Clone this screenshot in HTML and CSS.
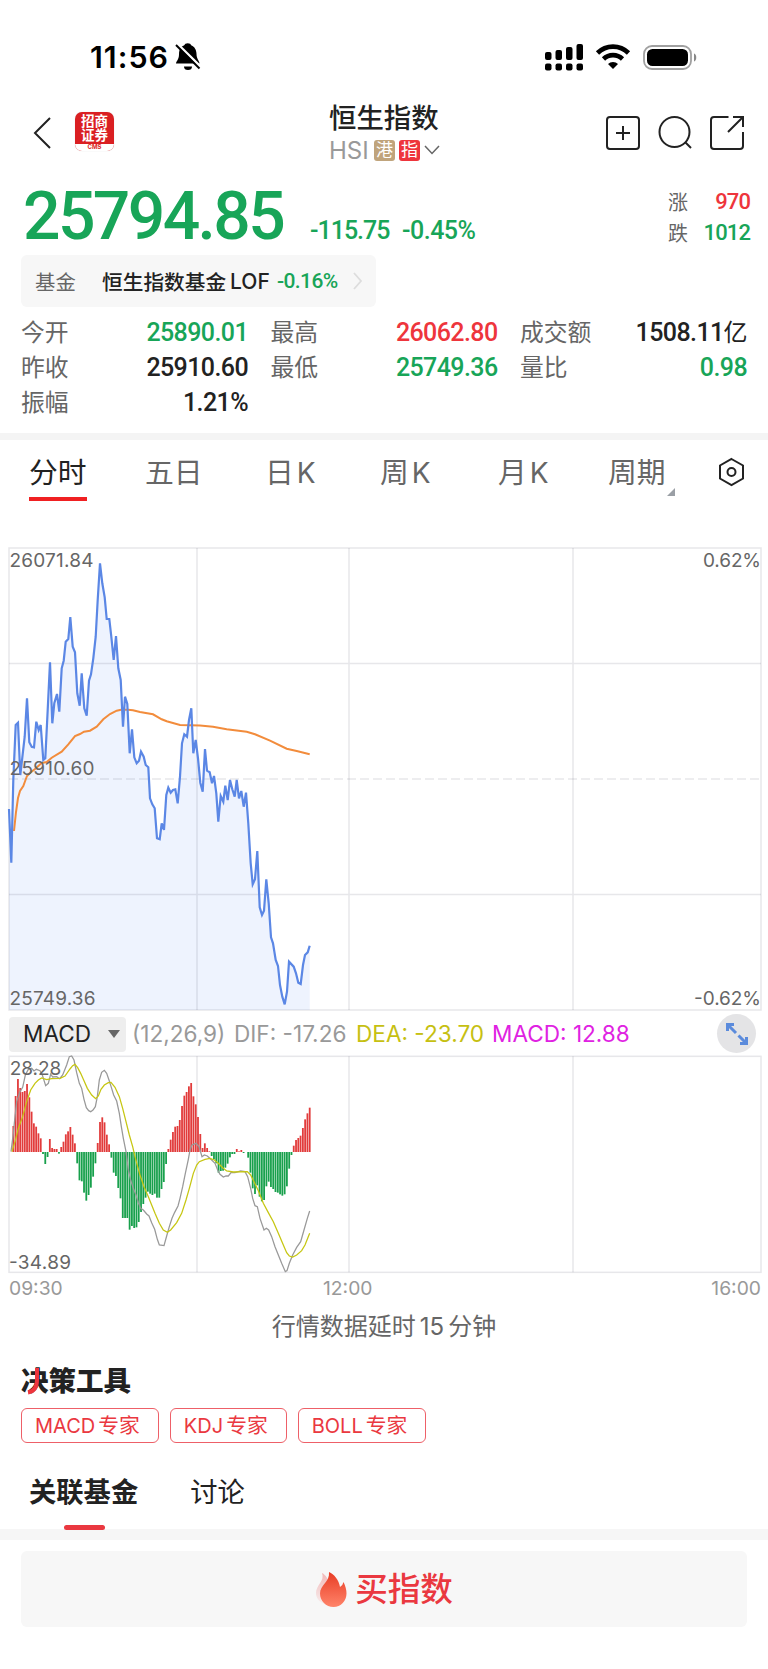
FILE: index.html
```html
<!DOCTYPE html>
<html lang="zh-CN">

<head>
    <meta charset="UTF-8">
    <meta name="viewport" content="width=device-width, initial-scale=1.0">
    <title>恒生指数 HSI</title>
    <link rel="stylesheet" href="styles.css">
</head>

<body>
    <div class="status">
        <span class="clock">11:56</span>
        <svg class="bell" width="26" height="28" viewBox="0 0 26 28">
            <path d="M1 20.500c0-2 3-4 3-9C4 5 7 3 9 2.500a4 3.500 0 0 1 7.500 0C19.500 3.500 21.500 7 21.500 11c0 5 3 7 3 9.500z" />
            <path d="M9 23.500h8a4 3.500 0 0 1-8 0z" />
            <path d="M1.500 0 26 24" stroke="#fff" stroke-width="2.500" />
            <path d="M1 2 24.500 25.500" stroke="#000" stroke-width="2" />
        </svg>
        <svg class="signal" width="172" height="30" viewBox="0 0 172 30">
            <g>
                <rect x="1" y="10" width="6.500" height="8" rx="2" />
                <rect x="11.500" y="8" width="6.500" height="10" rx="2" />
                <rect x="22" y="5" width="6.500" height="13" rx="2" />
                <rect x="32.500" y="2" width="6.500" height="16" rx="2" />
                <rect x="1" y="21.500" width="6.500" height="7" rx="2" />
                <rect x="11.500" y="21.500" width="6.500" height="7" rx="2" />
                <rect x="22" y="21.500" width="6.500" height="7" rx="2" />
                <rect x="32.500" y="21.500" width="6.500" height="7" rx="2" />
            </g>
            <g fill="none" stroke="#000" stroke-width="4.600">
                <path d="M53.500 11a22 22 0 0 1 31 0" />
                <path d="M59.500 17a13.500 13.500 0 0 1 19 0" />
            </g>
            <path d="M64 22a7 7 0 0 1 10 0l-5 5z" />
            <rect x="100" y="4" width="47" height="23" rx="8" fill="none" stroke="#a0a0a0" stroke-width="1.800" />
            <rect x="103" y="7" width="41" height="17" rx="5.500" />
            <path d="M150 11.500c3 .5 3 7.500 0 8z" fill="#888" />
        </svg>
    </div>

    <header class="header">
        <svg class="back" width="20" height="34" viewBox="0 0 20 34">
            <path d="M17 2 2 17l15 15" />
        </svg>
        <div class="logo">
            <div class="logo-name">招商<br>证券</div>
            <div class="logo-cms">CMS</div>
        </div>
        <div class="title">
            <h1>恒生指数</h1>
            <div class="code">
                <span class="hsi">HSI</span>
                <span class="badge badge-hk">港</span>
                <span class="badge badge-index">指</span>
                <svg width="16" height="10" viewBox="0 0 16 10">
                    <path d="M1 1l7 7.500L15 1" />
                </svg>
            </div>
        </div>
        <svg class="actions" width="142" height="36" viewBox="0 0 142 36">
            <rect x="2" y="2" width="32" height="32" rx="3" />
            <path d="M18 11v14M11 18h14" />
            <circle cx="69.500" cy="17" r="15" />
            <path d="M80 27l6 6" />
            <path d="M123.500 2H109q-3 0-3 3v26q0 3 3 3h26q3 0 3-3V17M128 2h10v10M138 2l-15 15" />
        </svg>
    </header>

    <section class="quote">
        <span class="price">25794.85</span>
        <span class="change">-115.75</span>
        <span class="change pct">-0.45%</span>
        <div class="updown">
            <div><span>涨</span><b class="up">970</b></div>
            <div><span>跌</span><b class="down">1012</b></div>
        </div>
    </section>

    <div class="fund">
        <span class="fund-label">基金</span>
        <span class="fund-name">恒生指数基金</span>
        <span class="fund-type">LOF</span>
        <span class="fund-pct">-0.16%</span>
        <svg width="10" height="20" viewBox="0 0 10 20">
            <path d="M1 2l7 8-7 8" />
        </svg>
    </div>

    <section class="stats">
        <div><span>今开</span><b class="down">25890.01</b></div>
        <div><span>最高</span><b class="up">26062.80</b></div>
        <div><span>成交额</span><b>1508.11<i>亿</i></b></div>
        <div><span>昨收</span><b>25910.60</b></div>
        <div><span>最低</span><b class="down">25749.36</b></div>
        <div><span>量比</span><b class="down">0.98</b></div>
        <div><span>振幅</span><b>1.21%</b></div>
    </section>

    <nav class="periods">
        <a class="active">分时</a>
        <a>五日</a>
        <a>日<em>K</em></a>
        <a>周<em>K</em></a>
        <a>月<em>K</em></a>
        <a class="more">周期</a>
        <svg width="27" height="30" viewBox="0 0 27 30">
            <path d="M13.500 2 25 8.500v13L13.500 28 2 21.500v-13z" />
            <circle cx="13.500" cy="15" r="4" />
        </svg>
    </nav>

    <!-- intraday price -->
    <svg class="chart" width="768" height="475" viewBox="0 540 768 475">
        <polygon id="area" class="area" />
        <g class="grid">
            <rect x="9" y="548" width="752" height="462" />
            <path d="M9 663.500H761M9 894.500H761M197 548V1010M349 548V1010M573 548V1010" />
            <path d="M9 779H761" stroke-dasharray="9 4" />
        </g>
        <polyline class="avg" points="14,831 16,812 18,798 20,791 23.300,786 25.500,780 27,776 30,773 35,769 41.700,763 46.700,762 51.700,757.700 61.700,751.700 68.300,744.300 75,736 80,734 84,731.700 90,730.700 96.700,726.700 103.300,719.300 110,714 116.700,710.700 121,709.700 128,709.700 133,710.300 140,712 153,714.300 161.700,719.300 166.700,721.300 180,725 200,725.500 213,726.700 226.700,729.300 246.700,731.700 255,734.300 270,740.700 286.700,748.700 296.700,751 309.700,754.300" />
        <polyline id="price" class="line" points="9,809 11.300,862.700 13.300,780 15.700,725 18,722.700 20.300,775 24.700,736.700 27,698.300 29.300,742.300 31.700,746.700 34,747.300 36.300,721.700 38.700,730 40.700,725 43.300,760 45.300,758.300 47.700,710 50,662.300 52.300,723.300 54.300,703.300 57,694 59.300,711.700 61.700,668.300 63.700,660.700 65.700,641.700 68.300,639 70.300,617 72.700,646.700 75,652.300 77.300,693.300 79.700,705.700 81.700,673.300 84.300,708.300 86.700,715.700 89,680.700 91,674.300 93.300,658.300 95.700,636.700 97.700,600 100,563.300 102.300,583.300 104.700,597.300 106.700,619 109.300,619 111.300,636.700 113.700,660 116,636 118.300,668.300 120.700,680 123,726.700 125,696.700 127.300,704 129.700,753.300 132,729.300 134.300,757.300 136.700,763.300 139,760.700 141,751.700 143.700,756.700 145.700,765 148.300,767.300 150,798.300 152.300,804.300 154.700,808.300 157,838.300 159.700,839.300 161.700,823.300 164,830 166.300,795 168.300,787.700 170.700,792.700 173,790 175.300,789.300 177.700,803.300 180,776.700 182,743.300 184.300,734.300 187,736.700 189,720 191.300,708.300 193.300,753.300 195.700,740 198,758.300 200.300,782.700 202.700,791.700 205,749 207,770.700 209.700,772.300 212,783.300 214,776 216.300,793.300 218.300,821.700 220.700,796 223.300,801.700 225.300,785.700 227.700,800 230,780 232.300,789.300 234.700,796.700 236.700,780 239,798.300 241.300,791 243.700,806.700 246,792.700 248.300,823.300 250.700,863.300 252.700,884.300 255,879.300 257.300,851 259.700,907.300 262,915 264,910.700 266.300,879.300 268.700,903.300 271,937.300 273,943.300 275.700,960 278,966 280,985 282.300,996.700 284.700,1004.300 287,991.700 289,961.700 293.700,966.700 296,973.300 298.300,982.700 300.700,984 303,965 305,955 307.700,952.300 309.700,945.700" />
        <g class="axis">
            <text x="9.500" y="566.500" textLength="84">26071.84</text>
            <text x="9.500" y="774.500" textLength="85">25910.60</text>
            <text x="9.500" y="1004.500" textLength="86">25749.36</text>
            <text x="761" y="566.500" textLength="58" text-anchor="end">0.62%</text>
            <text x="761" y="1004.500" textLength="67" text-anchor="end">-0.62%</text>
        </g>
    </svg>

    <div class="indicator">
        <div class="picker">MACD<i></i></div>
        <span class="params">(12,26,9)</span>
        <span class="dif">DIF: -17.26</span>
        <span class="dea">DEA: -23.70</span>
        <span class="macd">MACD: 12.88</span>
        <div class="expand">
            <svg width="24" height="24" viewBox="0 0 24 24">
                <path d="M2.500 9V2.500H9M3 3l8 8M21.500 15v6.500H15M21 21l-7.500-7.500" />
            </svg>
        </div>
    </div>

    <!-- MACD, drawn at 3 units per pixel -->
    <svg class="chart" width="768" height="219" viewBox="0 165 2304 657">
        <g class="grid grid-macd">
            <rect x="27" y="169" width="2256" height="648" />
            <path d="M591 169V817M1047 169V817M1719 169V817" />
        </g>
        <g id="bars"></g>
        <polyline class="dif-line" points="33,455 40,400 45,350 50,305 60,275 68,262 76,225 85,208 95,205 102,213 109,208 120,212 127,225 137,257 145,250 152,222 158,231 170,230 179,236 188,225 200,195 208,170 215,168 222,180 230,218 238,250 245,265 252,298 259,323 266,332 272,335 279,330 286,320 292,290 298,240 305,217 313,211 320,220 327,240 334,262 341,285 350,303 358,340 364,380 370,415 378,455 385,510 392,540 400,565 408,585 415,608 422,625 430,630 440,642 447,648 455,668 464,688 472,718 478,735 492,737 500,708 508,680 516,655 524,637 534,618 540,595 548,560 556,520 565,478 570,450 576,435 588,430 597,440 606,470 613,465 622,468 632,477 645,490 653,510 660,523 670,531 678,528 685,528 693,518 705,518 722,513 735,515 743,530 752,565 758,595 765,617 772,620 780,655 792,690 799,685 806,690 815,710 825,740 835,765 845,790 856,815 861,812 868,790 878,765 890,742 902,725 912,690 922,655 929,633" />
        <polyline class="dea-line" points="36,455 45,425 55,385 68,350 80,305 92,270 105,250 115,240 125,234 140,239 155,236 180,235 195,228 210,207 218,197 225,193 233,203 242,220 252,242 262,265 275,285 287,296 295,288 303,268 313,255 325,248 333,247 345,262 358,290 368,325 378,365 388,405 398,440 405,470 413,500 420,525 432,560 445,590 455,615 465,640 478,670 490,690 502,697 512,690 530,668 545,640 558,600 568,565 580,520 590,495 598,485 615,478 630,475 643,480 655,490 668,503 680,513 700,516 742,515 752,525 762,545 775,572 790,610 805,638 820,665 835,700 850,735 860,758 868,768 878,771 890,765 905,752 915,735 929,700" />
        <g class="axis axis-macd">
            <text x="29" y="224" textLength="155">28.28</text>
            <text x="27" y="806" textLength="186">-34.89</text>
        </g>
    </svg>

    <div class="times">
        <span>09:30</span>
        <span>12:00</span>
        <span>16:00</span>
    </div>

    <p class="delay">行情数据延时<span>15</span>分钟</p>

    <section class="tools">
        <h2>决策工具
            <svg width="14" height="28" viewBox="0 0 14 28">
                <path d="M10 0v12c0 8-3 11.500-9 12.500" />
            </svg>
        </h2>
        <div class="chips">
            <a><span>MACD</span>专家</a>
            <a><span>KDJ</span>专家</a>
            <a><span>BOLL</span>专家</a>
        </div>
    </section>

    <nav class="tabs">
        <a class="active">关联基金</a>
        <a>讨论</a>
    </nav>

    <div class="buy">
        <svg width="32" height="36" viewBox="0 0 32 36">
            <defs>
                <linearGradient id="flame" x1="0" y1="0" x2="0" y2="1">
                    <stop offset="0" stop-color="#e83c25" />
                    <stop offset="1" stop-color="#ff846a" />
                </linearGradient>
                <linearGradient id="shade" x1="0" y1="0" x2="0" y2="1">
                    <stop offset="0" stop-color="#f2b8b8" />
                    <stop offset="1" stop-color="#f7efef" />
                </linearGradient>
            </defs>
            <path d="M7 2c4 2 6 6 8 12l-2 20C6 33 1 28 1 22 1 14 10 10 7 2z" fill="url(#shade)" />
            <path d="M14 1c5 2 10 8 11 15q3-2 3.500-5c2 4 3 8 3 11.500C31.500 30 26 36 18.500 36S5 30 5 22.500C5 14 15 11 14 1z" fill="url(#flame)" />
        </svg>
        <span>买指数</span>
    </div>

    <script>
        // close the price line down to the bottom of the chart
        const line = document.getElementById('price').getAttribute('points');
        document.getElementById('area').setAttribute('points', line + ' 309.7,1010 9,1010');

        const hist = [
            78, 168, 219, 192, 180, 183, 204, 164, 121, 86, 76, 56, 41, -6, -36, -15, 39, 12, 9, 9,
            -5, 15, 31, 53, 62, 75, 52, 26, -34, -85, -88, -122, -146, -129, -107, -74, -34, 27, 90, 104,
            89, 52, 23, -17, -62, -72, -108, -139, -198, -198, -198, -233, -222, -228, -226, -210, -180, -156, -137, -119,
            -125, -129, -125, -137, -137, -111, -90, -36, 9, 37, 60, 76, 78, 96, 138, 169, 180, 197, 207, 167,
            143, 105, 54, 12, 26, 12, 2, -12, -22, -34, -62, -57, -56, -47, -35, -16, -6, -6, 9, 2,
            6, -3, 0, -17, -62, -109, -126, -100, -134, -148, -144, -103, -89, -105, -111, -120, -122, -127, -131, -127,
            -103, -50, -9, 19, 36, 42, 49, 72, 98, 116, 133
        ];
        const zero = 456;
        const step = 889 / (hist.length - 1);
        let bars = '';
        hist.forEach((v, i) => {
            const x = (40 + i * step - 2.6).toFixed(1);
            const y = v > 0 ? zero - v : zero;
            bars += `<rect class="${v > 0 ? 'bar-up' : 'bar-down'}" x="${x}" y="${y}" width="5.400" height="${Math.abs(v)}"/>`;
        });
        document.getElementById('bars').innerHTML = bars;
    </script>
</body>

</html>
```
FILE: styles.css
```css
* {
    box-sizing: border-box;
}

body {
    margin: 0;
    background-color: #fff;
    color: #222;
    font-family: Inter, "Noto Sans CJK SC", sans-serif;
}

svg {
    display: block;
    flex: none;
}

b,
i,
em {
    font-style: normal;
}

.up {
    color: #ee353c;
}

.down {
    color: #18a558;
}

/* status bar */
.status {
    display: flex;
    align-items: center;
    height: 100px;
    padding: 14px 52px 0 90px;
    color: #000;
}

.clock {
    width: 85px;
    font-size: 30.400px;
    font-weight: 600;
    letter-spacing: 1px;
}

.signal {
    margin-left: auto;
}

/* header */
.header {
    display: flex;
    align-items: center;
    height: 66px;
    padding: 0 21px 0 33px;
}

.back {
    fill: none;
    stroke: #222;
    stroke-width: 2;
}

.logo {
    width: 39px;
    height: 39px;
    margin: -3px 0 0 22px;
    border-radius: 7px;
    overflow: hidden;
    background-color: #da1f22;
    color: #fff;
    text-align: center;
    box-shadow: 0 0 1px #ccc;
}

.logo-name {
    height: 32px;
    padding-top: 2px;
    font-size: 13.500px;
    font-weight: 700;
    line-height: 14px;
}

.logo-cms {
    height: 7px;
    background-color: #fff;
    color: #da1f22;
    font-size: 6px;
    font-weight: 700;
    line-height: 6px;
}

.title {
    width: 112px;
    margin-left: 215px;
}

.title h1 {
    height: 34px;
    margin: 0;
    font-size: 27.400px;
    font-weight: 500;
    line-height: 36px;
}

.code {
    display: flex;
    align-items: center;
    height: 32px;
}

.hsi {
    width: 45px;
    color: #999;
    font-size: 24px;
}

.badge {
    width: 21px;
    height: 21px;
    margin-right: 4px;
    border-radius: 3px;
    color: #fff;
    font-size: 17px;
    line-height: 21px;
    text-align: center;
}

.badge-hk {
    background-color: #c0a47c;
}

.badge-index {
    background-color: #ee353c;
}

.code svg {
    fill: none;
    stroke: #666;
    stroke-width: 1.500;
}

.actions {
    margin-left: auto;
    fill: none;
    stroke: #222;
    stroke-width: 2;
}

/* price */
.quote {
    display: flex;
    align-items: baseline;
    height: 89px;
    padding: 12px 18px 0 23px;
    font-family: Roboto, "Noto Sans CJK SC", sans-serif;
    color: #18a558;
}

.price {
    width: 287px;
    font-size: 66px;
    font-weight: 500;
    letter-spacing: -2.600px;
}

.change {
    width: 92px;
    font-size: 25px;
    font-weight: 500;
    letter-spacing: -1px;
}

.pct {
    letter-spacing: -0.5px;
}

.updown {
    align-self: flex-start;
    width: 82px;
    margin-left: auto;
    padding-top: 8px;
}

.updown div {
    display: flex;
    align-items: center;
    justify-content: space-between;
    height: 31px;
}

.updown span {
    color: #666;
    font-size: 20px;
}

.updown b {
    font-size: 22px;
    font-weight: 500;
    letter-spacing: -0.9px;
}

.fund {
    display: flex;
    align-items: center;
    width: 355px;
    height: 52px;
    margin-left: 21px;
    padding-left: 14px;
    border-radius: 6px;
    background-color: #f7f7f7;
    font-size: 20.400px;
}

.fund-label {
    width: 67px;
    color: #666;
}

.fund-name {
    width: 128px;
    font-size: 20.700px;
    font-weight: 500;
}

.fund-type {
    width: 47px;
    font-size: 21px;
    font-weight: 500;
}

.fund-pct {
    width: 76px;
    color: #18a558;
    font-family: Roboto, sans-serif;
    font-size: 21px;
    font-weight: 500;
    letter-spacing: -0.6px;
}

.fund svg {
    fill: none;
    stroke: #ddd;
    stroke-width: 1.800;
}

.stats {
    display: grid;
    grid-template-columns: repeat(3, 227px);
    grid-auto-rows: 35px;
    column-gap: 22.500px;
    height: 126px;
    padding: 8px 21px 0;
}

.stats div {
    display: flex;
    align-items: center;
    justify-content: space-between;
}

.stats span {
    padding-bottom: 1px;
    color: #666;
    font-size: 23.800px;
    line-height: 31px;
}

.stats b {
    font-family: Roboto, sans-serif;
    font-size: 25px;
    font-weight: 500;
    letter-spacing: -0.6px;
}

.stats i {
    font-family: "Noto Sans CJK SC", sans-serif;
    font-size: 24px;
    font-weight: 400;
    line-height: 25px;
}

/* chart */
.periods {
    display: grid;
    grid-template-columns: 116px 120px 115px 118px 110px 110px 27px;
    height: 107px;
    padding-left: 29px;
    border-top: 7px solid #f4f4f4;
    font-size: 28.800px;
}

.periods a {
    position: relative;
    justify-self: start;
    height: 61px;
    line-height: 66px;
    color: #666;
}

.periods .active {
    border-bottom: 4px solid #f02022;
    color: #222;
}

.periods em {
    margin-left: 3px;
    font-size: 28px;
}

.more::after {
    content: "";
    position: absolute;
    right: -9px;
    bottom: 5px;
    border-bottom: 8px solid #9a9fa5;
    border-left: 8px solid transparent;
}

.periods svg {
    margin-top: 17px;
    fill: none;
    stroke: #222;
    stroke-width: 2;
}

.grid {
    fill: none;
    stroke: rgba(60, 60, 80, 0.12);
    stroke-width: 1.500;
}

.grid-macd {
    stroke-width: 4.500;
}

.area {
    fill: #eef3fe;
}

.avg {
    fill: none;
    stroke: #f28c3c;
    stroke-width: 2;
}

.line {
    fill: none;
    stroke: #5b87e5;
    stroke-width: 2.200;
}

.axis {
    fill: #666;
    font-size: 19px;
}

.axis-macd {
    font-size: 57px;
}

.indicator {
    display: flex;
    align-items: center;
    height: 40px;
    padding: 0 12px 0 9px;
    font-size: 22.600px;
    line-height: 32px;
    white-space: nowrap;
}

.indicator span {
    padding-bottom: 2px;
}

.picker {
    display: flex;
    align-items: center;
    justify-content: space-between;
    width: 117px;
    height: 35px;
    margin-top: -2px;
    padding: 0 6px 0 14px;
    border-radius: 4px;
    background-color: #eee;
}

.picker i {
    border: 6px solid transparent;
    border-top: 8px solid #666;
    border-bottom: 0;
}

.params {
    width: 102px;
    margin-left: 6px;
    color: #999;
}

.dif {
    width: 122px;
    color: #999;
}

.dea {
    width: 136px;
    color: #c6c012;
}

.macd {
    color: #df22e2;
}

.expand {
    display: flex;
    align-items: center;
    justify-content: center;
    width: 39px;
    height: 39px;
    margin: -3px 0 0 auto;
    border-radius: 50%;
    background-color: #e4e4e6;
}

.expand svg {
    fill: none;
    stroke: #5b8bdc;
    stroke-width: 3;
}

.bar-up {
    fill: #e23b3b;
}

.bar-down {
    fill: #18a04c;
}

.dif-line,
.dea-line {
    fill: none;
    stroke: #999;
    stroke-width: 3.800;
}

.dea-line {
    stroke: #c6c612;
}

.times {
    display: grid;
    grid-template-columns: 314px 1fr auto;
    height: 36px;
    padding: 3px 7px 0 9px;
    color: #999;
    font-size: 19.300px;
    line-height: 22px;
}

.delay {
    height: 32px;
    margin: 0;
    color: #666;
    font-size: 24px;
    line-height: 34px;
    text-align: center;
}

.delay span {
    margin: 0 4px;
}

/* tools */
.tools {
    padding: 22px 21px 0;
}

.tools h2 {
    position: relative;
    height: 44px;
    margin: 0;
    font-size: 27.500px;
    font-weight: 900;
    line-height: 34px;
}

.tools h2 svg {
    position: absolute;
    left: 6px;
    top: 4px;
    fill: none;
    stroke: #ee353c;
    stroke-width: 4;
}

.chips {
    display: flex;
    gap: 11px;
}

.chips a {
    height: 35px;
    padding: 0 18px 0 13px;
    border: 1px solid #ee6068;
    border-radius: 6px;
    color: #ea3840;
    font-size: 20.800px;
    line-height: 34px;
}

.chips span {
    margin-right: 3px;
    font-size: 20px;
}

.tabs {
    display: flex;
    gap: 52px;
    height: 97px;
    padding: 25px 29px 0;
    border-bottom: 11px solid #f6f6f6;
    font-size: 27.300px;
    line-height: 50px;
}

.tabs .active {
    position: relative;
    font-weight: 700;
}

.tabs .active::after {
    content: "";
    position: absolute;
    left: 35px;
    top: 57px;
    width: 41px;
    height: 5px;
    border-radius: 3px;
    background-color: #ea3840;
}

.buy {
    display: flex;
    align-items: center;
    justify-content: center;
    gap: 8px;
    height: 76px;
    margin: 11px 21px 42px;
    border-radius: 6px;
    background-color: #f7f7f7;
    color: #ea3840;
    font-size: 32.600px;
    font-weight: 500;
    line-height: 76px;
}
```
